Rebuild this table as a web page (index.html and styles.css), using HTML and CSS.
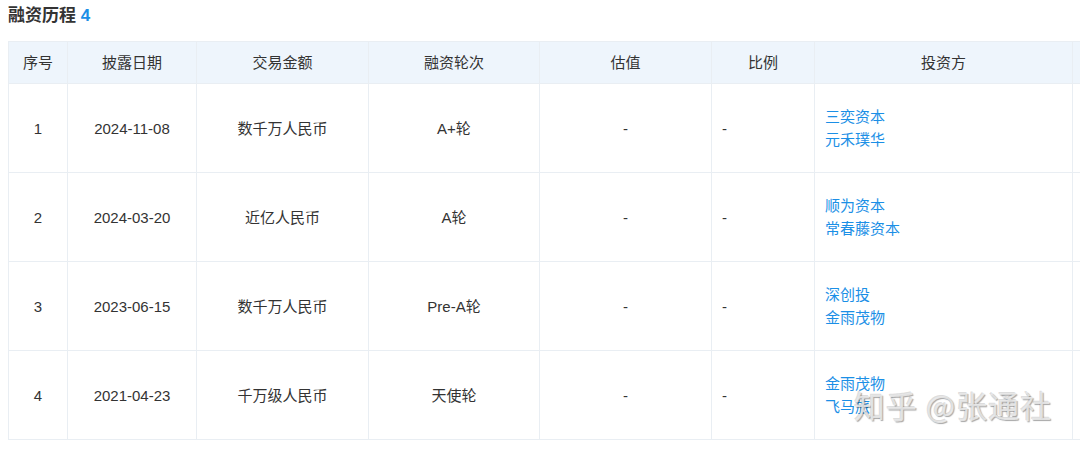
FILE: index.html
```html
<!DOCTYPE html>
<html lang="zh">
<head>
<meta charset="utf-8">
<link rel="stylesheet" href="styles.css">
</head>
<body>
<div class="page">
  <h2 class="title">融资历程 <span class="count">4</span></h2>
  <table class="fin">
    <colgroup>
      <col class="c-no"><col class="c-date"><col class="c-amt"><col class="c-round"><col class="c-val"><col class="c-ratio"><col class="c-inv"><col class="c-extra">
    </colgroup>
    <thead>
      <tr><th>序号</th><th>披露日期</th><th>交易金额</th><th>融资轮次</th><th>估值</th><th>比例</th><th>投资方</th><th></th></tr>
    </thead>
    <tbody>
      <tr><td>1</td><td>2024-11-08</td><td>数千万人民币</td><td>A+轮</td><td>-</td><td class="left">-</td><td class="left inv"><a>三奕资本</a><a>元禾璞华</a></td><td></td></tr>
      <tr><td>2</td><td>2024-03-20</td><td>近亿人民币</td><td>A轮</td><td>-</td><td class="left">-</td><td class="left inv"><a>顺为资本</a><a>常春藤资本</a></td><td></td></tr>
      <tr><td>3</td><td>2023-06-15</td><td>数千万人民币</td><td>Pre-A轮</td><td>-</td><td class="left">-</td><td class="left inv"><a>深创投</a><a>金雨茂物</a></td><td></td></tr>
      <tr><td>4</td><td>2021-04-23</td><td>千万级人民币</td><td>天使轮</td><td>-</td><td class="left">-</td><td class="left inv"><a>金雨茂物</a><a>飞马旅</a></td><td></td></tr>
    </tbody>
  </table>
  <div class="watermark">知乎 @张通社</div>
</div>
</body>
</html>
```
FILE: styles.css
```css
html, body {
  margin: 0;
  padding: 0;
  background: #fff;
  overflow: hidden;
}
body {
  width: 1080px;
  height: 450px;
  font-family: "Liberation Sans", "Noto Sans CJK SC", sans-serif;
  color: #333;
}
.page {
  position: relative;
  padding: 5px 0 0 8px;
}
.title {
  margin: 0 0 14px 0;
  font-size: 17px;
  line-height: 22px;
  font-weight: bold;
  color: #333;
}
.count {
  color: #1b8fe6;
}
.fin {
  border-collapse: collapse;
  table-layout: fixed;
  width: 1164px;
  font-size: 15px;
}
.c-no { width: 59px; }
.c-date { width: 129px; }
.c-amt { width: 172px; }
.c-round { width: 171px; }
.c-val { width: 172px; }
.c-ratio { width: 103px; }
.c-inv { width: 258px; }
.c-extra { width: 100px; }
.fin th, .fin td {
  border: 1px solid #e9eef3;
  text-align: center;
  padding: 0 10px;
  line-height: 23px;
}
.fin th {
  background: #eef5fc;
  height: 42px;
  font-weight: normal;
  color: #333;
  box-sizing: border-box;
}
.fin td {
  height: 88px;
  color: #333;
}
.fin td.left { text-align: left; }
.inv a {
  display: block;
  color: #1b8fe6;
  text-decoration: none;
}
.watermark {
  position: absolute;
  left: 854px;
  top: 386px;
  font-size: 31px;
  line-height: 38px;
  font-family: "Noto Sans CJK SC", sans-serif;
  color: rgba(235, 235, 235, 0.85);
  text-shadow: 1px 1px 1px rgba(0, 0, 0, 0.35), -1px -1px 0 rgba(120, 120, 120, 0.25);
  letter-spacing: 1px;
}
```
